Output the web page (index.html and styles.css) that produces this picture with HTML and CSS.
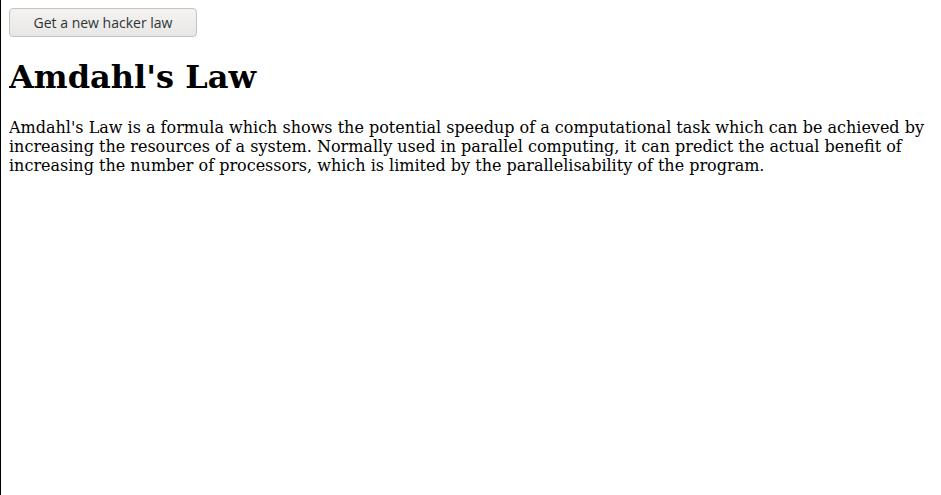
FILE: index.html
```html
<!DOCTYPE html>
<html>
<head>
<meta charset="utf-8">
<link rel="stylesheet" href="styles.css">
</head>
<body>
<button class="law-btn" type="button">Get a new hacker law</button>
<h1 class="law-title">Amdahl's Law</h1>
<p class="law-text">Amdahl's Law is a formula which shows the potential speedup of a computational task which can be achieved by increasing the resources of a system. Normally used in parallel computing, it can predict the actual benefit of increasing the number of processors, which is limited by the parallelisability of the program.</p>
</body>
</html>
```
FILE: styles.css
```css
html {
  border-left: 1px solid #000;
  min-height: 100%;
  box-sizing: border-box;
}
body {
  margin: 8px 8px 8px 8px;
  margin-left: 8px;
  font-family: "DejaVu Serif", serif;
  font-size: 16px;
  color: #000;
  background: #fff;
}
.law-btn {
  display: block;
  width: 188px;
  height: 29px;
  padding: 0 10px;
  font-family: "Open Sans", sans-serif;
  font-size: 14px;
  color: #2e3436;
  background: linear-gradient(#f4f3f2, #e9e7e5);
  border: 1px solid #c6c2be;
  border-radius: 4px;
}
.law-title {
  font-size: 32px;
  font-weight: bold;
  margin: 21.44px 0;
}
.law-text {
  margin: 16px 0;
}
```
